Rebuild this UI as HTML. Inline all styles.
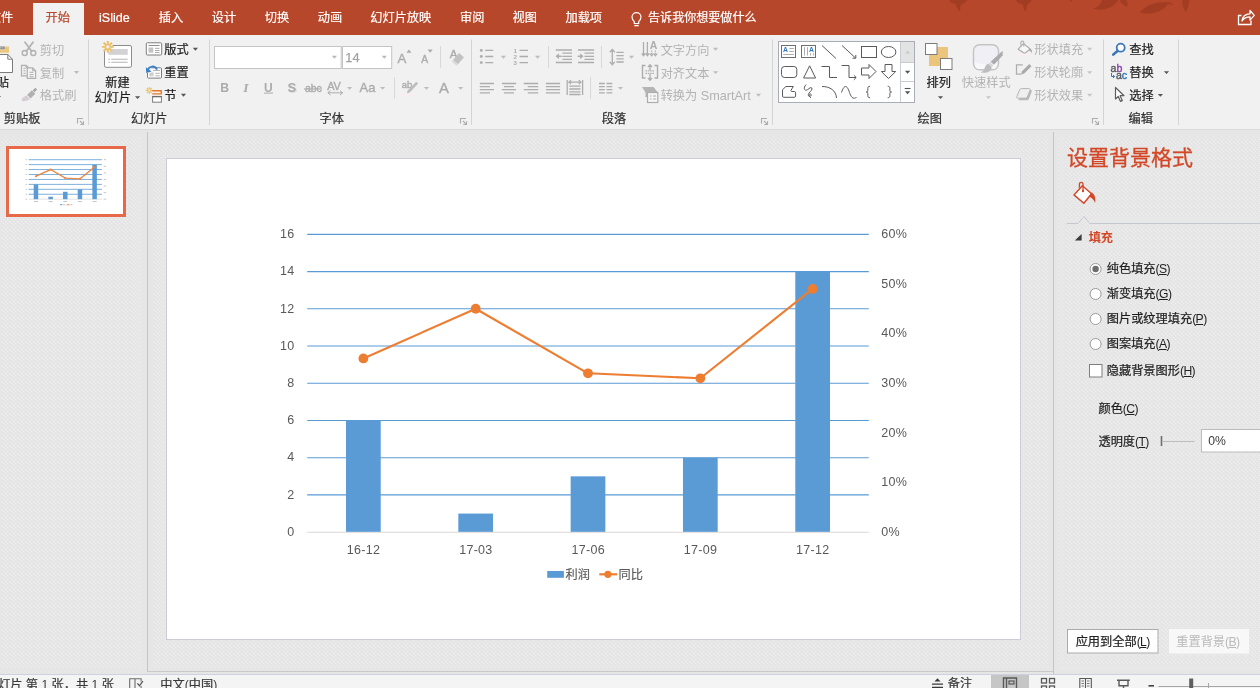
<!DOCTYPE html><html lang="zh-CN"><head><meta charset="utf-8"><title>PowerPoint</title><style>
html,body{margin:0;padding:0}
body{width:1260px;height:688px;overflow:hidden;position:relative;background:#e6e6e6;font-family:"Liberation Sans","Noto Sans CJK SC",sans-serif}
div{position:absolute;box-sizing:border-box}
svg{display:block;overflow:hidden;will-change:transform}
svg text{font-family:"Liberation Sans","Noto Sans CJK SC",sans-serif}
#dots{position:absolute;left:0;top:0;will-change:auto}
#tabs{left:0;top:0;width:1260px;height:35px;background:#b7472a}
#ribbon{left:0;top:35px;width:1260px;height:95px;background:#f1f1f1;border-bottom:1px solid #dadada}
#thumbs{left:0;top:132px;width:148px;height:540px;border-right:1px solid #c4c4c4}
#thumb{left:6px;top:146px;width:120px;height:71px;border:3px solid #e8694a;background:#fff}
#slide{left:166px;top:158px;width:855px;height:482px;border:1px solid #cbccd8;background:#fff}
#work-bottom{left:148px;top:671px;width:906px;height:1px;background:#c9c9c9}
#pane{left:1053px;top:132px;width:207px;height:542px;border-left:1px solid #c4c4c4}
#status{left:0;top:674px;width:1260px;height:14px;background:#f4f4f4;border-top:1px solid #d0d1de}
</style></head><body><svg id="dots" width="1260" height="688"><defs><pattern id="dp" width="4" height="4" patternUnits="userSpaceOnUse"><rect x="1" y="1" width="1" height="1" fill="#f0f0f0"/><rect x="3" y="3" width="1" height="1" fill="#f0f0f0"/></pattern></defs><rect x="0" y="137" width="143" height="532" fill="url(#dp)"/><rect x="152" y="136" width="897" height="532" fill="url(#dp)"/><rect x="1058" y="136" width="202" height="535" fill="url(#dp)"/></svg><div id="tabs"><svg width="1260" height="35" viewBox="0 0 1260 35"><g fill="#a23d23"><path d="M949 0c1.200 2.200 3.500 3.600 6.500 4c.600 3 2.200 5.600 4.800 7.600c-.300-3 0-5.500 1.200-7.600c2.600-.500 4.700-1.800 6.200-4z"/><path d="M1015.500 0c1.500 2.500 4 4 7.200 4.200c.300 3 1.300 5.600 3.100 7.900c.200-3 .800-5.600 2-7.900c1.800-.800 3.200-2.200 4-4.200z"/><path d="M1069.500 0h3l-1.300 2z"/><path d="M1118 0c-2.500 5.200-8.500 9-16.500 9.600c-3 .200-6-.200-8.500-1c4.200-1.200 7.500-3.700 9-8.600z"/><path d="M1119.800 0c1.200 3 3.600 5.500 7.200 7c.800-2.500.600-5-.500-7z"/><path d="M1139.700 12.600c5-6 12.500-9.800 21.500-10l6.300-.500c2.200 0 4.400 1 6.500 2.700c-2.200-.600-4.200-.800-6.200-.500c-3.200 5-10 8.700-18 9.300c-3.800.300-7.200 0-10.100-1z"/><path d="M1182.300 0c-.300 4.500 1 8.600 3.800 12.200c1.600-3.600 2.700-7.700 3.200-12.200z"/></g><rect x="33" y="3" width="51" height="32" fill="#f1f1f1"/><text x="-11.15" y="22.3" font-size="12.2" fill="#ffffff" stroke="#ffffff" stroke-width=".2" textLength="24.4">文件</text><text x="45.45" y="22.3" font-size="12.2" fill="#b7472a" stroke="#b7472a" stroke-width=".2" textLength="24.4">开始</text><text x="99" y="22" font-size="12.6" fill="#fff" stroke="#fff" stroke-width=".200">iSlide</text><text x="158.75" y="22.3" font-size="12.2" fill="#ffffff" stroke="#ffffff" stroke-width=".2" textLength="24.4">插入</text><text x="211.75" y="22.3" font-size="12.2" fill="#ffffff" stroke="#ffffff" stroke-width=".2" textLength="24.4">设计</text><text x="264.75" y="22.3" font-size="12.2" fill="#ffffff" stroke="#ffffff" stroke-width=".2" textLength="24.4">切换</text><text x="317.75" y="22.3" font-size="12.2" fill="#ffffff" stroke="#ffffff" stroke-width=".2" textLength="24.4">动画</text><text x="370.25" y="22.3" font-size="12.2" fill="#ffffff" stroke="#ffffff" stroke-width=".2" textLength="61">幻灯片放映</text><text x="460.05" y="22.3" font-size="12.2" fill="#ffffff" stroke="#ffffff" stroke-width=".2" textLength="24.4">审阅</text><text x="512.45" y="22.3" font-size="12.2" fill="#ffffff" stroke="#ffffff" stroke-width=".2" textLength="24.4">视图</text><text x="565.45" y="22.3" font-size="12.2" fill="#ffffff" stroke="#ffffff" stroke-width=".2" textLength="36.6">加载项</text><g fill="none" stroke="#fff" stroke-width="1.200"><path d="M634.300 21.700c-1.400-1.400-2.300-2.800-2.300-4.600a4.500 4.500 0 0 1 9 0c0 1.800-.900 3.200-2.300 4.600v1.800h-4.400z"/><path d="M634.300 25.600h4.400" stroke-width="1.400"/></g><text x="648.06" y="22.24" font-size="12.05" fill="#ffffff" stroke="#ffffff" stroke-width=".2" textLength="108.45">告诉我你想要做什么</text><g fill="none" stroke="#fff" stroke-width="1.3"><path d="M1241.5 15.5h-3v9h12.500v-4"/><path d="M1242 21c.5-4.500 3.500-7 8-7.200v-3.300l4.300 4.900l-4.300 4.700v-3.300c-3.500 0-6 1.100-8 4.200z" stroke-linejoin="round"/></g></svg></div><div id="ribbon"><svg width="1260" height="94" viewBox="0 35 1260 94"><path d="M-6 49.400h11v-3h4v6.400h-15z" fill="#edc77d"/><path d="M-3 46.400h7.800v2.900h-7.800z" fill="#8f8f8f"/><path d="M0 47.800h3.500" stroke="#c9c9c9" stroke-width="1" stroke-dasharray="1 .700"/><path d="M-6 54.500h13.800l4.700 4.700v13.300h-18.500z" fill="#fff" stroke="#7b7b7b" stroke-width="1"/><path d="M7.800 54.500v4.700h4.700" fill="none" stroke="#7b7b7b" stroke-width="1"/><text x="-15.55" y="86.9" font-size="12.2" fill="#1f1f1f" stroke="#1f1f1f" stroke-width=".22" textLength="24.4">粘贴</text><path d="M-4.2 96.05h5.2l-2.6 2.9z" fill="#555"/><g fill="none" stroke="#b3b3b3" stroke-width="1.500"><circle cx="24.700" cy="53.100" r="2.500"/><circle cx="33.300" cy="53.100" r="2.500"/><path d="M26.300 51.200L33 42.200M31.700 51.200L25 42.200" stroke-width="1.800" stroke-linecap="round"/></g><text x="39.85" y="54.5" font-size="12.2" fill="#b3b3b3" textLength="24.4">剪切</text><g fill="none" stroke="#b0b0b0" stroke-width="1.200"><path d="M28.300 67.800v-.500l-2.200-2h-4.600v10.500h5.500"/><path d="M26 65.300v2.200h2.200" stroke-width="1"/><path d="M27.300 67.800h5.300l3 3v7.500h-8.300z" fill="#f4f4f4"/><path d="M32.600 67.800v3h3" stroke-width="1"/><path d="M23.500 68.300h2.200M23.500 70.800h2.200M23.500 73.300h2.200M29.500 72.300h4M29.500 74.600h4M29.500 76.700h4" stroke-width="1"/></g><text x="39.85" y="77.5" font-size="12.2" fill="#b3b3b3" textLength="24.4">复制</text><path d="M73.9 71.05h5.2l-2.6 2.9z" fill="#bdbdbd"/><g><path d="M35.300 87.700l1.900 1.900l-2.700 2.700l-1.900-1.900z" fill="#a9a9a9"/><path d="M31.800 90.200l3.500 3.500l-4.700 4.700l-3.500-3.500z" fill="#b1b1b1"/><path d="M26.300 95.600l3.600 3.600l-2.800 1.300l-4.300 1l-1.400-1.400l1.700-2.700z" fill="#d3cbd2"/><path d="M24.300 97.300l2.400 2.400M22.800 99.300l1.500 1.500" stroke="#e6e0e4" stroke-width=".700"/></g><text x="39.850" y="100" font-size="12.2" fill="#b3b3b3" textLength="36.6">格式刷</text><text x="3.85" y="123.4" font-size="12.2" fill="#333333" stroke="#333333" stroke-width=".22" textLength="36.6">剪贴板</text><g transform="translate(77 118)" fill="none" stroke="#adadad" stroke-width="1.100"><path d="M0.500 5.500V0.500H6"/><path d="M3 3L6.200 6.200"/><path d="M6.500 3.300V6.500H3.300"/></g><rect x="88" y="39.500" width="1" height="85.500" fill="#d4d4d4"/><rect x="104.500" y="45.500" width="27" height="21.800" rx="1.500" fill="#fff" stroke="#8c8c8c" stroke-width="1"/><rect x="108.300" y="49" width="19.400" height="5.800" fill="#d2d2d4"/><path d="M108.300 59.300h1.800M111.300 59.300h16.300M108.300 62.300h1.800M111.300 62.300h16.300" stroke="#b4b4b4" stroke-width="1.100"/><circle cx="107.800" cy="46.900" r="5.200" fill="#f1f1f1"/><path d="M109.39 46.900L113.700 46.900M108.930 48.030L111.970 51.070M107.800 48.490L107.800 52.800M106.670 48.030L103.630 51.070M106.210 46.900L101.900 46.900M106.670 45.770L103.630 42.730M107.800 45.310L107.800 41M108.930 45.770L111.970 42.730" stroke="#ecbf60" stroke-width="1.9" fill="none"/><text x="105.25" y="87" font-size="12.2" fill="#1f1f1f" stroke="#1f1f1f" stroke-width=".22" textLength="24.4">新建</text><text x="94.65" y="102" font-size="12.2" fill="#1f1f1f" stroke="#1f1f1f" stroke-width=".22" textLength="36.6">幻灯片</text><path d="M135 96.150h5.2l-2.6 2.9z" fill="#555"/><rect x="146.300" y="42.800" width="15.400" height="12.200" rx="1" fill="#fff" stroke="#7d7d7d" stroke-width="1"/><path d="M148.500 45.500h11" stroke="#8a8a8a" stroke-width="1"/><rect x="148.500" y="47.500" width="4.800" height="5.200" fill="#c4c4c4"/><path d="M155 48.300h4.500M155 50.500h4.500M155 52.500h4.500" stroke="#a0a0a0" stroke-width="0.900"/><text x="164.35" y="53.9" font-size="12.2" fill="#1f1f1f" stroke="#1f1f1f" stroke-width=".22" textLength="24.4">版式</text><path d="M192.8 47.850h5.2l-2.6 2.9z" fill="#555"/><rect x="147.500" y="67.800" width="14" height="10.300" rx="1" fill="#fff" stroke="#7d7d7d" stroke-width="1"/><rect x="149.300" y="72.300" width="4.300" height="4" fill="#cfcfcf"/><path d="M155.300 73.300h4.500M155.300 75.800h4.500M153 70.500h7" stroke="#ababab" stroke-width="0.900"/><path d="M144.800 66.500h6.500v6.500h-6.500z" fill="#f1f1f1"/><path d="M157 69.600c-1-2.100-2.800-3.200-5-3c-1.900.200-3.300 1.200-4.200 2.900" fill="none" stroke="#3d7fc9" stroke-width="1.900"/><path d="M145.900 67.300l.300 5.600l5.300-1.400z" fill="#3d7fc9"/><text x="164.35" y="77.3" font-size="12.2" fill="#1f1f1f" stroke="#1f1f1f" stroke-width=".22" textLength="24.4">重置</text><path d="M150.250 90.400L152.800 90.400M149.970 91.070L151.770 92.870M149.300 91.340L149.300 93.900M148.630 91.070L146.830 92.870M148.360 90.400L145.800 90.400M148.630 89.730L146.830 87.930M149.300 89.460L149.300 86.900M149.970 89.730L151.770 87.930" stroke="#ecbf60" stroke-width="1.1" fill="none"/><path d="M152.300 90.700h8.900v3.200h-8.900" fill="none" stroke="#e97826" stroke-width="1.400"/><rect x="152.600" y="96.600" width="8.800" height="5.600" fill="#fff" stroke="#7d7d7d" stroke-width="1"/><path d="M152.100 96.600h9.800" stroke="#6f6f6f" stroke-width="1.300"/><text x="164.350" y="100" font-size="12.2" fill="#1f1f1f" stroke="#1f1f1f" stroke-width=".22" textLength="12.2">节</text><path d="M180.9 93.850h5.2l-2.6 2.9z" fill="#555"/><text x="130.95" y="123.4" font-size="12.2" fill="#333333" stroke="#333333" stroke-width=".22" textLength="36.6">幻灯片</text><rect x="209" y="39.5" width="1" height="85.5" fill="#d4d4d4"/><rect x="214.500" y="46.500" width="126.700" height="22" fill="#fff" stroke="#c4c4c4" stroke-width="1"/><path d="M331.8 55.750h5.2l-2.6 2.9z" fill="#b9b9b9"/><rect x="342.500" y="46.500" width="49.200" height="22" fill="#fff" stroke="#c4c4c4" stroke-width="1"/><text x="345.300" y="61.900" font-size="12.800" fill="#a0a2a8" stroke="#a0a2a8" stroke-width=".250">14</text><path d="M381.7 55.75h5.2l-2.6 2.9z" fill="#b9b9b9"/><text x="397.600" y="62.600" font-size="13.200" fill="#ababab" stroke="#ababab" stroke-width=".350">A</text><path d="M406.400 52.700l2.500-3.200l2.500 3.200z" fill="#ababab"/><text x="421.200" y="62.600" font-size="10.300" fill="#ababab" stroke="#ababab" stroke-width=".350">A</text><path d="M427.600 49.500h5.200l-2.600 3.200z" fill="#ababab"/><rect x="440" y="46" width="1" height="21.700" fill="#d8d8d8"/><text x="449.800" y="57.800" font-size="11.500" fill="#ababab" stroke="#ababab" stroke-width=".350">A</text><path d="M459 53l5 4.200l-6 7l-5-4.200z" fill="#c2c2c2"/><path d="M453 60l5 4.200l-1.300 1.500l-5-4.200z" fill="#d9d9d9"/><text x="220.200" y="91.700" font-size="12.200" font-weight="bold" fill="#ababab">B</text><text x="243.200" y="92" font-size="13.500" font-style="italic" font-weight="bold" style="font-family:Liberation Serif,serif" fill="#ababab">I</text><text x="264" y="91.500" font-size="12" fill="#ababab" font-weight="bold">U</text><rect x="264" y="92.600" width="9" height="1" fill="#ababab"/><text x="288.800" y="93.400" font-size="13" font-weight="bold" fill="#dcdcdc">S</text><text x="287.400" y="92.200" font-size="13" font-weight="bold" fill="#ababab">S</text><text x="305" y="91.900" font-size="10.400" fill="#ababab" stroke="#ababab" stroke-width=".350">abc</text><rect x="304" y="88.400" width="18" height="1.100" fill="#ababab"/><text x="327.300" y="89.600" font-size="11" fill="#ababab" letter-spacing="-0.300" stroke="#ababab" stroke-width=".350">AV</text><path d="M328 92.800h14.500M330.500 90.600l-2.700 2.200l2.700 2.200M340 90.600l2.700 2.200l-2.700 2.200" fill="none" stroke="#ababab" stroke-width="1"/><path d="M347 86.950h5.2l-2.6 2.9z" fill="#bdbdbd"/><text x="359.600" y="92" font-size="12.800" fill="#ababab" stroke="#ababab" stroke-width=".350">Aa</text><path d="M380 86.950h5.2l-2.6 2.9z" fill="#bdbdbd"/><rect x="394" y="77.200" width="1" height="21.500" fill="#d8d8d8"/><text x="401.800" y="88" font-size="9.500" fill="#ababab" stroke="#ababab" stroke-width=".350">ab</text><path d="M416.200 81.800l2 1.800l-8.500 9l-3 1l1-3z" fill="#bdbdbd"/><rect x="402" y="93.300" width="16" height="2.900" fill="#f7efef"/><path d="M423.9 86.950h5.2l-2.6 2.9z" fill="#bdbdbd"/><text x="439" y="92.800" font-size="14.800" fill="#ababab" stroke="#ababab" stroke-width=".350">A</text><path d="M458 86.950h5.2l-2.6 2.9z" fill="#bdbdbd"/><text x="319.55" y="123.4" font-size="12.2" fill="#333333" stroke="#333333" stroke-width=".22" textLength="24.4">字体</text><g transform="translate(460 118)" fill="none" stroke="#adadad" stroke-width="1.100"><path d="M0.500 5.500V0.500H6"/><path d="M3 3L6.200 6.200"/><path d="M6.500 3.300V6.500H3.300"/></g><rect x="471" y="39.5" width="1" height="85.5" fill="#d4d4d4"/><g fill="#adadad"><circle cx="481.300" cy="50.400" r="1.450"/><circle cx="481.300" cy="56.500" r="1.450"/><circle cx="481.300" cy="62.600" r="1.450"/></g><path d="M485.2 50.400H493.2M485.2 56.500H493.2M485.2 62.600H493.2" stroke="#adadad" stroke-width="1.3" fill="none"/><path d="M500.8 55.750h5.2l-2.6 2.9z" fill="#bdbdbd"/><g font-size="6.200" fill="#adadad" font-weight="bold"><text x="513.400" y="52.600">1</text><text x="513.400" y="58.700">2</text><text x="513.400" y="64.800">3</text></g><path d="M519.5 50.400H528M519.5 56.500H528M519.5 62.600H528" stroke="#adadad" stroke-width="1.3" fill="none"/><path d="M535 55.750h5.2l-2.6 2.9z" fill="#bdbdbd"/><rect x="548" y="46" width="1" height="21.700" fill="#d8d8d8"/><path d="M555.8 50H572M555.8 62.500H572" stroke="#adadad" stroke-width="1.3" fill="none"/><path d="M562.4 53.200H572M562.4 56.300H572M562.4 59.400H572" stroke="#adadad" stroke-width="1.3" fill="none"/><path d="M557.3 56.300h4.500" fill="none" stroke="#adadad" stroke-width="1.500"/><path d="M555.6 56.300l3.300-3v6z" fill="#adadad"/><path d="M577.9 50H594.1M577.9 62.500H594.1" stroke="#adadad" stroke-width="1.3" fill="none"/><path d="M584.5 53.200H594.1M584.5 56.300H594.1M584.5 59.400H594.1" stroke="#adadad" stroke-width="1.3" fill="none"/><path d="M577.6 56.300h4" fill="none" stroke="#adadad" stroke-width="1.500"/><path d="M583.5 56.300l-3.300-3v6z" fill="#adadad"/><rect x="601" y="46" width="1" height="21.7" fill="#d8d8d8"/><path d="M612.300 49.800v14.600M609.800 52.300l2.500-2.800l2.500 2.800M609.800 61.900l2.500 2.800l2.500-2.800" fill="none" stroke="#adadad" stroke-width="1.300"/><path d="M616.4 52.400H623.7M616.4 55.600H623.7M616.4 58.800H623.7M616.4 62H623.7" stroke="#adadad" stroke-width="1.3" fill="none"/><path d="M628.9 55.750h5.2l-2.6 2.9z" fill="#bdbdbd"/><path d="M479.8 83.500H494M479.8 89.700H494" stroke="#adadad" stroke-width="1.3" fill="none"/><path d="M479.8 86.600H490M479.8 92.800H490" stroke="#adadad" stroke-width="1.3" fill="none"/><path d="M501.9 83.500H516.1M501.9 89.700H516.1" stroke="#adadad" stroke-width="1.3" fill="none"/><path d="M504 86.600H514M504 92.800H514" stroke="#adadad" stroke-width="1.3" fill="none"/><path d="M523.8 83.500H538.2M523.8 89.700H538.2" stroke="#adadad" stroke-width="1.3" fill="none"/><path d="M527.8 86.600H538.2M527.8 92.800H538.2" stroke="#adadad" stroke-width="1.3" fill="none"/><path d="M545.9 83.500H560.1M545.9 86.600H560.1M545.9 89.700H560.1M545.9 92.800H560.1" stroke="#adadad" stroke-width="1.3" fill="none"/><path d="M567.200 80v15M582.600 80v15" stroke="#adadad" stroke-width="1.300"/><path d="M569 82.200h11.800M571 80.300l-2.200 1.900l2.200 1.900M578.800 80.300l2.200 1.900l-2.200 1.900" fill="none" stroke="#adadad" stroke-width="1.200"/><path d="M569.3 86.200H580.5M569.3 89H580.5M569.3 91.800H580.5M569.3 94.500H580.5" stroke="#adadad" stroke-width="1.3" fill="none"/><rect x="590" y="77.200" width="1" height="21.500" fill="#d8d8d8"/><path d="M599 83.500H604.8M599 86.600H604.8M599 89.700H604.8M599 92.800H604.8" stroke="#adadad" stroke-width="1.3" fill="none"/><path d="M606.5 83.500H612.3M606.5 86.600H612.3M606.5 89.700H612.3M606.5 92.800H612.3" stroke="#adadad" stroke-width="1.3" fill="none"/><path d="M617.9 86.950h5.2l-2.6 2.9z" fill="#bdbdbd"/><path d="M643.500 42v13.500M647.400 42v13.500M641.700 53.300l1.800 2.300l1.800-2.300M645.600 53.300l1.800 2.300l1.800-2.300" fill="none" stroke="#adadad" stroke-width="1.300"/><text x="649.800" y="49.400" font-size="10.500" fill="#adadad" font-weight="bold">A</text><path d="M651.600 50.500v5M655.400 50.500v5" stroke="#adadad" stroke-width="1.200" stroke-dasharray="1.200 1"/><path d="M649.900 53.600l1.700 2.100l1.700-2.100M653.700 53.600l1.700 2.100l1.700-2.100" fill="none" stroke="#adadad" stroke-width="1.200"/><text x="660.65" y="54.7" font-size="12.2" fill="#b3b3b3" textLength="48.8">文字方向</text><path d="M713 47.850h5.2l-2.6 2.9z" fill="#bdbdbd"/><path d="M645.500 65.500h-3v12.500h3M654.500 65.500h3v12.500h-3" fill="none" stroke="#adadad" stroke-width="1.400"/><path d="M650 65v5.500M648 67l2-2.200l2 2.200M650 74v6M648 78l2 2.200l2-2.200" fill="none" stroke="#adadad" stroke-width="1.300"/><path d="M645.500 70.800h9M645.500 73.300h9" stroke="#adadad" stroke-width="1.200" stroke-dasharray="1.500 .800"/><text x="660.65" y="77.6" font-size="12.2" fill="#b3b3b3" textLength="48.8">对齐文本</text><path d="M713 71.150h5.2l-2.6 2.9z" fill="#bdbdbd"/><path d="M642 87h11.500l4 5h-10.500v5h-1.500v-4.500z" fill="#b4b4b4"/><rect x="647.500" y="92.500" width="10.300" height="10" fill="#f6f6f6" stroke="#adadad" stroke-width="1.200"/><path d="M650 96h1.500M653 96h3M650 99h1.500M653 99h3" stroke="#adadad" stroke-width="1.200"/><text x="660.65" y="100.1" font-size="12.2" fill="#b3b3b3" textLength="36.6">转换为</text><text x="697.25" y="100.1" font-size="12.7" fill="#b3b3b3" xml:space="preserve"> SmartArt</text><path d="M755.9 93.850h5.2l-2.6 2.9z" fill="#bdbdbd"/><text x="601.75" y="123.4" font-size="12.2" fill="#333333" stroke="#333333" stroke-width=".22" textLength="24.4">段落</text><g transform="translate(761 118)" fill="none" stroke="#adadad" stroke-width="1.100"><path d="M0.500 5.500V0.500H6"/><path d="M3 3L6.200 6.200"/><path d="M6.500 3.300V6.500H3.300"/></g><rect x="772" y="39.5" width="1" height="85.5" fill="#d4d4d4"/><rect x="778.500" y="41.500" width="136" height="61" fill="#fff" stroke="#a9aeb6" stroke-width="1"/><rect x="901" y="42" width="13" height="20" fill="#e3e3e3"/><path d="M900.500 42v60M901 62.500h13M901 81.500h13" stroke="#c9ccd2" stroke-width="1" fill="none"/><path d="M905 53.500l2.600-3l2.600 3z" fill="#c9c9c9"/><path d="M904.9 70.800h5.400l-2.700 3z" fill="#555"/><path d="M904.700 88.500h5.800" stroke="#555" stroke-width="1.100"/><path d="M904.9 91.300h5.400l-2.700 3z" fill="#555"/><g fill="none" stroke="#5a5a5a" stroke-width="1"><rect x="781.500" y="45.500" width="14" height="12" stroke="#6e6e6e"/><path d="M789.300 48.500h4.500M789.300 51.500h4.500M783.200 54.500h10.600" stroke="#adadad"/><rect x="801.500" y="45.500" width="14" height="12" stroke="#6e6e6e"/><path d="M804.500 47.200v8.300M807.500 47.200v8.300" stroke="#adadad"/><path d="M810.500 53.200v2.300M813.500 53.200v2.300" stroke="#adadad"/><path d="M822 45.500l14 13"/><path d="M842 45.500l13.500 12.500M852.500 58.200h3.300v-3.300"/><rect x="861.500" y="46.500" width="15" height="11"/><ellipse cx="888.600" cy="52" rx="7.300" ry="5.500"/><rect x="781.500" y="66.500" width="15.300" height="11" rx="3"/><path d="M809.600 65.800l6 12.200h-12z"/><path d="M821.500 66.500h8v11h7.500"/><path d="M841.500 65.500h7.500v12h7M853.800 75.200l2.400 2.300l-2.400 2.300"/><path d="M861.500 68h7.500v-3.500l7 7l-7 7v-3.500h-7.500z"/><path d="M885 64.500h7v7h3.700l-7.200 7l-7.200-7h3.700z"/><path d="M786 86.500h7.300l-2.300 3.800c-.300.700.200 1.200 1 1.200h2.300c.800 0 1.300.500 1.300 1.300v3.200c0 .800-.500 1.300-1.300 1.300h-10.500c-.800 0-1.300-.500-1.300-1.300v-6.300z" stroke-linejoin="round"/><path d="M806.200 84.500c-1.600 1.600-2.400 3.600-1.600 5c.800 1.400 2.900.600 4.400-.900c1.500-1.500 3-1.300 3 .300c0 2-3.400 3.500-3.700 5.700c-.200 1.700 1.400 2.300 2.500 1.300c1-1 .300-2.200-.800-1.900c-1.300.400-1.200 2.200 0 3.100l.900.700"/><path d="M822 86.500c8 0 14 4 14.500 11.500"/><path d="M841.500 92.500c2.500-8 5.500-8 8 0c2.500 7 4.500 6 7 5"/></g><path d="M870 86.300c-1.600 0-2.200.700-2.200 2v2.300c0 1-.600 1.400-1.600 1.400c1 0 1.600.400 1.600 1.400v2.300c0 1.300.600 2 2.200 2M887.700 86.300c1.600 0 2.200.700 2.200 2v2.300c0 1 .600 1.400 1.600 1.400c-1 0-1.600.400-1.600 1.400v2.300c0 1.300-.600 2-2.200 2" fill="none" stroke="#5a5a5a" stroke-width="1"/><text x="783.100" y="52.300" font-size="6.800" font-weight="bold" fill="#3375c0">A</text><text x="809.100" y="52.300" font-size="6.800" font-weight="bold" fill="#3375c0">A</text><rect x="929" y="47" width="19" height="19" fill="#ebc57c"/><rect x="925.500" y="43.500" width="11.500" height="11" fill="#fff" stroke="#7c7c7c" stroke-width="1"/><rect x="940.500" y="58.500" width="11.500" height="11" fill="#fff" stroke="#7c7c7c" stroke-width="1"/><text x="926.45" y="87.1" font-size="12.2" fill="#1f1f1f" stroke="#1f1f1f" stroke-width=".22" textLength="24.4">排列</text><path d="M937.9 96.150h5.2l-2.6 2.9z" fill="#555"/><rect x="973.500" y="44.700" width="25" height="25" rx="6" fill="#f0eff5" stroke="#c3c3c3" stroke-width="1.400"/><path d="M975 62c3 3 18 3 22 0v3c0 2-1.500 4-4 4h-14c-2.500 0-4-2-4-4z" fill="#f8f8fa"/><path d="M1002.600 50.800v4.600l-8.600 9.400l-3.400-3z" fill="#acacac"/><path d="M990 62.400l3.400 3l-1.400 1.600l-3.400-3z" fill="#d6d6d6"/><path d="M988.200 63.800l3.300 2.900c.5 2.500-1.500 5.200-5 5.800c-1.800.300-3.800.300-5.700-.100c2.400-1 3.300-2.500 4-4.700c.600-1.900 1.700-3.300 3.400-3.900z" fill="#bdbdbd"/><text x="961.85" y="87.1" font-size="12.2" fill="#b3b3b3" textLength="48.8">快速样式</text><path d="M985.9 96.150h5.2l-2.6 2.9z" fill="#c6c6c6"/><path d="M1023.400 43.600l6.800 5.300l-5.600 4.600l-6.400-4.400z" fill="#f7f7f7" stroke="#b1b1b1" stroke-width="1.300" stroke-linejoin="round"/><path d="M1023.800 46.500v-3.700c0-2.300-3-2.300-3 0v2.700" fill="none" stroke="#b1b1b1" stroke-width="1.100"/><path d="M1030.300 48.700c1.500.800 2 2.300 1.500 4.200c-.900-1.300-1.900-2-3.200-2.700z" fill="#a8a8a8"/><rect x="1016" y="53.600" width="15.800" height="3.300" fill="#f6efef"/><text x="1034.350" y="54" font-size="12.2" fill="#b3b3b3" textLength="48.8">形状填充</text><path d="M1087.1 47.850h5.2l-2.6 2.9z" fill="#c6c6c6"/><path d="M1022.800 64.800h-6.300v9.400h4.500" fill="none" stroke="#aeaeae" stroke-width="1.300"/><path d="M1029.300 64l2.200 2.200l-7.300 7.300l-3.200 1l1-3.200z" fill="#aaaaaa"/><text x="1034.35" y="77.3" font-size="12.2" fill="#b3b3b3" textLength="48.8">形状轮廓</text><path d="M1087.1 71.150h5.2l-2.6 2.9z" fill="#c6c6c6"/><path d="M1018.600 100.200l3.200-9c.300-.900 1-1.400 2-1.400h6.300c1.400 0 2 .900 1.500 2.200l-2.700 7c-.300.800-1 1.200-2 1.200z" fill="#b9b9b9"/><path d="M1016.800 96.700l2.800-6.800c.300-.800 1-1.300 2-1.300h7c1.300 0 1.900.800 1.400 2l-2.700 6.400c-.300.800-1 1.200-2 1.200h-7.400c-1.200 0-1.600-.600-1.100-1.500z" fill="#efefef" stroke="#b4b4b4" stroke-width="1"/><text x="1034.35" y="99.9" font-size="12.2" fill="#b3b3b3" textLength="48.8">形状效果</text><path d="M1087.1 93.850h5.2l-2.6 2.9z" fill="#c6c6c6"/><text x="917.45" y="123.4" font-size="12.2" fill="#333333" stroke="#333333" stroke-width=".22" textLength="24.4">绘图</text><g transform="translate(1092 118)" fill="none" stroke="#adadad" stroke-width="1.100"><path d="M0.500 5.500V0.500H6"/><path d="M3 3L6.200 6.200"/><path d="M6.500 3.300V6.500H3.300"/></g><rect x="1103" y="39.5" width="1" height="85.5" fill="#d4d4d4"/><circle cx="1120.700" cy="47.700" r="4" fill="#fff" stroke="#3b78b8" stroke-width="1.800"/><path d="M1117.500 50.900l-4.200 3.700" stroke="#3b78b8" stroke-width="2.600" stroke-linecap="round"/><text x="1129.250" y="54" font-size="12.2" fill="#1f1f1f" stroke="#1f1f1f" stroke-width=".22" textLength="24.4">查找</text><g font-size="10.600" stroke-width=".400"><text x="1110.600" y="71.500" fill="#5a5a5a" stroke="#5a5a5a">a</text><text x="1116.500" y="71.500" fill="#8d46b0" stroke="#8d46b0">b</text><text x="1116" y="78.900" fill="#5a5a5a" stroke="#5a5a5a">a</text><text x="1121.800" y="78.900" fill="#2e79c2" stroke="#2e79c2">c</text></g><path d="M1111.500 73v3.500h3M1113 75l1.700 1.500l-1.700 1.500" fill="none" stroke="#2e79c2" stroke-width="1"/><text x="1129.25" y="77.3" font-size="12.2" fill="#1f1f1f" stroke="#1f1f1f" stroke-width=".22" textLength="24.4">替换</text><path d="M1163.9 71.150h5.2l-2.6 2.9z" fill="#555"/><path d="M1115.500 87.500v11.500l2.800-2.600l2.200 5l1.800-.800l-2.200-4.900h3.900z" fill="#fff" stroke="#5e5e5e" stroke-width="1.200" stroke-linejoin="round"/><text x="1129.250" y="100" font-size="12.2" fill="#1f1f1f" stroke="#1f1f1f" stroke-width=".22" textLength="24.4">选择</text><path d="M1157.8 93.950h5.2l-2.6 2.9z" fill="#555"/><text x="1128.45" y="123.4" font-size="12.2" fill="#333333" stroke="#333333" stroke-width=".22" textLength="24.4">编辑</text><rect x="1178" y="39.5" width="1" height="85.5" fill="#d4d4d4"/></svg></div><div id="thumbs"></div><div id="thumb"><svg width="114" height="65" viewBox="9 149 114 65"><path d="M28.64 159.69H101.93M28.64 164.62H101.93M28.64 169.56H101.93M28.64 174.5H101.93M28.64 179.44H101.93M28.64 184.38H101.93M28.64 189.31H101.93M28.64 194.25H101.93" stroke="#7fb0de" stroke-width="1" fill="none"/><path d="M28.64 199.19H101.93" stroke="#dcdcdc" stroke-width=".800"/><rect x="33.72" y="184.38" width="4.500" height="14.81" fill="#5b9bd5"/><rect x="48.37" y="196.72" width="4.500" height="2.47" fill="#5b9bd5"/><rect x="63.03" y="191.78" width="4.500" height="7.41" fill="#5b9bd5"/><rect x="77.69" y="189.31" width="4.500" height="9.88" fill="#5b9bd5"/><rect x="92.35" y="164.62" width="4.500" height="34.56" fill="#5b9bd5"/><polyline points="35.97,176.15 50.62,169.56 65.28,178.12 79.94,178.78 94.6,166.93" fill="none" stroke="#ec8540" stroke-width="1.250"/><circle cx="35.97" cy="176.15" r="1" fill="#ec8540"/><circle cx="50.62" cy="169.56" r="1" fill="#ec8540"/><circle cx="65.28" cy="178.12" r="1" fill="#ec8540"/><circle cx="79.94" cy="178.78" r="1" fill="#ec8540"/><circle cx="94.6" cy="166.93" r="1" fill="#ec8540"/><g fill="#c9c9c9"><rect x="25.48" y="159.19" width="1.600" height="1" /><rect x="25.48" y="164.12" width="1.600" height="1" /><rect x="25.48" y="169.06" width="1.600" height="1" /><rect x="25.48" y="174" width="1.600" height="1" /><rect x="25.48" y="178.94" width="1.600" height="1" /><rect x="25.48" y="183.88" width="1.600" height="1" /><rect x="25.48" y="188.81" width="1.600" height="1" /><rect x="25.48" y="193.75" width="1.600" height="1" /><rect x="25.48" y="198.69" width="1.600" height="1" /><rect x="103.65" y="159.19" width="2.600" height="1" /><rect x="103.65" y="165.77" width="2.600" height="1" /><rect x="103.65" y="172.35" width="2.600" height="1" /><rect x="103.65" y="178.94" width="2.600" height="1" /><rect x="103.65" y="185.52" width="2.600" height="1" /><rect x="103.65" y="192.11" width="2.600" height="1" /><rect x="103.65" y="198.69" width="2.600" height="1" /><rect x="33.97" y="200.98" width="4" height="1.100" /><rect x="48.62" y="200.98" width="4" height="1.100" /><rect x="63.28" y="200.98" width="4" height="1.100" /><rect x="77.94" y="200.98" width="4" height="1.100" /><rect x="92.6" y="200.98" width="4" height="1.100" /></g><rect x="59.93" y="204.23" width="2.200" height="1" fill="#5b9bd5"/><rect x="62.54" y="204.23" width="3" height="1" fill="#c9c9c9"/><rect x="66.72" y="204.23" width="2.400" height="1" fill="#ee8a45"/><rect x="69.46" y="204.23" width="3" height="1" fill="#c9c9c9"/></svg></div><div id="slide"><svg width="853" height="480" viewBox="167 159 853 480"><path d="M307.2 234.3H868.8M307.2 271.54H868.8M307.2 308.77H868.8M307.2 346.01H868.8M307.2 383.25H868.8M307.2 420.49H868.8M307.2 457.73H868.8M307.2 494.96H868.8" stroke="#5b9bd5" stroke-width="1.200" fill="none"/><path d="M307.2 532.2H868.8" stroke="#dbd6d6" stroke-width="1.100"/><rect x="346.01" y="420.49" width="34.700" height="111.31" fill="#5b9bd5"/><rect x="458.33" y="513.58" width="34.700" height="18.22" fill="#5b9bd5"/><rect x="570.65" y="476.34" width="34.700" height="55.46" fill="#5b9bd5"/><rect x="682.97" y="457.73" width="34.700" height="74.08" fill="#5b9bd5"/><rect x="795.29" y="271.54" width="34.700" height="260.26" fill="#5b9bd5"/><polyline points="363.36,358.43 475.68,308.77 588,373.32 700.32,378.29 812.64,288.92" fill="none" stroke="#ed7d31" stroke-width="2.100" stroke-linejoin="round"/><circle cx="363.36" cy="358.43" r="4.900" fill="#ed7d31"/><circle cx="475.68" cy="308.77" r="4.900" fill="#ed7d31"/><circle cx="588" cy="373.32" r="4.900" fill="#ed7d31"/><circle cx="700.32" cy="378.29" r="4.900" fill="#ed7d31"/><circle cx="812.64" cy="288.92" r="4.900" fill="#ed7d31"/><g font-size="12.500" fill="#595959" letter-spacing="0.300"><text x="294.500" y="238.05" text-anchor="end">16</text><text x="294.500" y="275.29" text-anchor="end">14</text><text x="294.500" y="312.52" text-anchor="end">12</text><text x="294.500" y="349.76" text-anchor="end">10</text><text x="294.500" y="387" text-anchor="end">8</text><text x="294.500" y="424.24" text-anchor="end">6</text><text x="294.500" y="461.48" text-anchor="end">4</text><text x="294.500" y="498.71" text-anchor="end">2</text><text x="294.500" y="535.95" text-anchor="end">0</text><text x="881.200" y="238.05">60%</text><text x="881.200" y="287.7">50%</text><text x="881.200" y="337.35">40%</text><text x="881.200" y="387">30%</text><text x="881.200" y="436.65">20%</text><text x="881.200" y="486.3">10%</text><text x="881.200" y="535.95">0%</text><text x="363.56" y="554" text-anchor="middle">16-12</text><text x="475.88" y="554" text-anchor="middle">17-03</text><text x="588.2" y="554" text-anchor="middle">17-06</text><text x="700.52" y="554" text-anchor="middle">17-09</text><text x="812.84" y="554" text-anchor="middle">17-12</text></g><rect x="547.200" y="571" width="16.700" height="6.800" fill="#5b9bd5"/><text x="565.45" y="579.1" font-size="12.2" fill="#595959" stroke="#595959" stroke-width=".15" textLength="24.4">利润</text><path d="M599.300 574.300H617.200" stroke="#ed7d31" stroke-width="2.200"/><circle cx="607.900" cy="574.300" r="3.600" fill="#ed7d31"/><text x="618.45" y="579.1" font-size="12.2" fill="#595959" stroke="#595959" stroke-width=".15" textLength="24.4">同比</text></svg></div><div id="work-bottom"></div><div id="pane"><svg width="206" height="542" viewBox="1054 132 206 542"><text x="1066.96" y="165.28" font-size="21" fill="#d24726" stroke="#d24726" stroke-width=".3" textLength="126">设置背景格式</text><g fill="none" stroke="#d24726" stroke-width="1.500" stroke-linejoin="round"><path d="M1082.300 185.800l9.300 8l-7.800 9.400l-9.800-8.300z" fill="#fff"/><path d="M1083 190.500v-6.200c0-2.700-3.600-2.700-3.600 0v3.500" stroke-width="1.300"/></g><circle cx="1083" cy="191" r="1.200" fill="#d24726"/><path d="M1091.400 192.600c3 1.400 4.800 4.800 3.700 10.400c-1.200-3.400-3.200-5.400-6.300-6.600z" fill="#d24726"/><path d="M1067 223.500h11l6-7l6 7h170" fill="none" stroke="#c5c7d1" stroke-width="1"/><path d="M1081.600 234v6.600h-6.800z" fill="#3c3c3c"/><text x="1088.65" y="242.1" font-size="12.2" font-weight="bold" fill="#d24726" textLength="24.4">填充</text><circle cx="1095.600" cy="269" r="5.500" fill="#fff" stroke="#9a9a9a" stroke-width="1"/><circle cx="1095.600" cy="269" r="3.200" fill="#6e6e6e"/><text x="1106.75" y="273.1" font-size="12.2" fill="#1f1f1f" stroke="#1f1f1f" stroke-width=".22" textLength="48.8">纯色填充</text><text x="1155.55" y="273.1" font-size="12.2" fill="#1f1f1f" letter-spacing="-0.6" xml:space="preserve">(S)</text><rect x="1159.01" y="274" width="7.54" height="1" fill="#1f1f1f"/><circle cx="1095.600" cy="294" r="5.500" fill="#fff" stroke="#9a9a9a" stroke-width="1"/><text x="1106.75" y="298.1" font-size="12.2" fill="#1f1f1f" stroke="#1f1f1f" stroke-width=".22" textLength="48.8">渐变填充</text><text x="1155.55" y="298.1" font-size="12.2" fill="#1f1f1f" letter-spacing="-0.6" xml:space="preserve">(G)</text><rect x="1159.01" y="299" width="8.89" height="1" fill="#1f1f1f"/><circle cx="1095.600" cy="319" r="5.500" fill="#fff" stroke="#9a9a9a" stroke-width="1"/><text x="1106.75" y="323.1" font-size="12.2" fill="#1f1f1f" stroke="#1f1f1f" stroke-width=".22" textLength="85.4">图片或纹理填充</text><text x="1192.15" y="323.1" font-size="12.2" fill="#1f1f1f" letter-spacing="-0.6" xml:space="preserve">(P)</text><rect x="1195.61" y="324" width="7.54" height="1" fill="#1f1f1f"/><circle cx="1095.600" cy="344" r="5.500" fill="#fff" stroke="#9a9a9a" stroke-width="1"/><text x="1106.75" y="348.1" font-size="12.2" fill="#1f1f1f" stroke="#1f1f1f" stroke-width=".22" textLength="48.8">图案填充</text><text x="1155.55" y="348.1" font-size="12.2" fill="#1f1f1f" letter-spacing="-0.6" xml:space="preserve">(A)</text><rect x="1159.01" y="349" width="7.54" height="1" fill="#1f1f1f"/><rect x="1089.500" y="364.500" width="12.500" height="12.500" fill="#fff" stroke="#7f7f7f" stroke-width="1"/><text x="1106.75" y="374.9" font-size="12.2" fill="#1f1f1f" stroke="#1f1f1f" stroke-width=".22" textLength="73.2">隐藏背景图形</text><text x="1179.95" y="374.9" font-size="12.2" fill="#1f1f1f" letter-spacing="-0.6" xml:space="preserve">(H)</text><rect x="1183.41" y="376" width="8.21" height="1" fill="#1f1f1f"/><text x="1098.45" y="412.5" font-size="12.2" fill="#1f1f1f" stroke="#1f1f1f" stroke-width=".22" textLength="24.4">颜色</text><text x="1122.85" y="412.5" font-size="12.2" fill="#1f1f1f" letter-spacing="-0.6" xml:space="preserve">(C)</text><rect x="1126.31" y="414" width="8.21" height="1" fill="#1f1f1f"/><text x="1098.45" y="445.5" font-size="12.2" fill="#1f1f1f" stroke="#1f1f1f" stroke-width=".22" textLength="36.6">透明度</text><text x="1135.05" y="445.5" font-size="12.2" fill="#1f1f1f" letter-spacing="-0.6" xml:space="preserve">(T)</text><rect x="1138.51" y="447" width="6.85" height="1" fill="#1f1f1f"/><path d="M1161.500 436v10" stroke="#6f6f6f" stroke-width="1.600"/><path d="M1163 441.500h31.500" stroke="#bdbdbd" stroke-width="1"/><rect x="1201.500" y="429.500" width="70" height="22.500" fill="#fff" stroke="#bcbcbc" stroke-width="1"/><text x="1208.300" y="445.300" font-size="12.200" fill="#3a3a3a">0%</text><rect x="1067.500" y="629.500" width="90.500" height="23.500" fill="#fdfdfd" stroke="#acacac" stroke-width="1"/><text x="1075.65" y="645.7" font-size="12.2" fill="#1f1f1f" stroke="#1f1f1f" stroke-width=".22" textLength="61">应用到全部</text><text x="1136.65" y="645.7" font-size="12.2" fill="#1f1f1f" letter-spacing="-0.6" xml:space="preserve">(L)</text><rect x="1140.11" y="647" width="6.19" height="1" fill="#1f1f1f"/><rect x="1169" y="629" width="80" height="24.500" fill="#f8f8f8"/><text x="1176.25" y="645.7" font-size="12.2" fill="#b9b9b9" textLength="48.8">重置背景</text><text x="1225.05" y="645.7" font-size="12.2" fill="#b9b9b9" letter-spacing="-0.6" xml:space="preserve">(B)</text><rect x="1228.51" y="647" width="7.54" height="1" fill="#b9b9b9"/></svg></div><div id="status"><svg width="1260" height="13" viewBox="0 675 1260 13"><text x="-14.15" y="688.8" font-size="12.2" fill="#3a3a3a" stroke="#3a3a3a" stroke-width=".22" textLength="36.6">幻灯片</text><text x="25.84" y="688.8" font-size="12.2" fill="#3a3a3a" stroke="#3a3a3a" stroke-width=".22" textLength="12.2">第</text><text x="38.04" y="688.8" font-size="12.2" fill="#3a3a3a" xml:space="preserve"> 1 </text><text x="51.6" y="688.8" font-size="12.2" fill="#3a3a3a" stroke="#3a3a3a" stroke-width=".22" textLength="36.6">张，共</text><text x="88.2" y="688.8" font-size="12.2" fill="#3a3a3a" xml:space="preserve"> 1 </text><text x="101.77" y="688.8" font-size="12.2" fill="#3a3a3a" stroke="#3a3a3a" stroke-width=".22" textLength="12.2">张</text><path d="M129.700 688v-9.300h5.300v9.300M135 678.700h6.100v2.800M141.100 686v2" fill="none" stroke="#6c6c6c" stroke-width="1.100"/><path d="M137.400 683.400l2.100 2.400l3.400-4.600" fill="none" stroke="#555" stroke-width="1.300"/><text x="160.35" y="688.8" font-size="12.2" fill="#3a3a3a" stroke="#3a3a3a" stroke-width=".22" textLength="24.4">中文</text><text x="184.75" y="688.8" font-size="12.2" fill="#3a3a3a" xml:space="preserve">(</text><text x="188.81" y="688.8" font-size="12.2" fill="#3a3a3a" stroke="#3a3a3a" stroke-width=".22" textLength="24.4">中国</text><text x="213.21" y="688.8" font-size="12.2" fill="#3a3a3a" xml:space="preserve">)</text><path d="M934.500 681.500l3-3.200l3 3.200z" fill="#3a3a3a"/><path d="M932 684.200h11M932 687.300h11" stroke="#3a3a3a" stroke-width="1.200"/><text x="947.75" y="688.2" font-size="12.2" fill="#3a3a3a" stroke="#3a3a3a" stroke-width=".22" textLength="24.4">备注</text><rect x="991" y="675" width="38" height="13" fill="#c6c6c6"/><path d="M1003.500 688v-10h13v10M1006.500 688v-10" fill="none" stroke="#585858" stroke-width="1.400"/><rect x="1009" y="681" width="5" height="3" fill="none" stroke="#585858" stroke-width="1.200"/><g fill="none" stroke="#585858" stroke-width="1.300"><rect x="1041.500" y="678.500" width="5" height="4.500"/><rect x="1049.500" y="678.500" width="5" height="4.500"/><rect x="1041.500" y="686" width="5" height="4"/><rect x="1049.500" y="686" width="5" height="4"/></g><path d="M1079.800 688v-9.500h11.500v9.500M1085.500 678.500v9.500" fill="none" stroke="#585858" stroke-width="1.100"/><path d="M1081.500 681h2.500M1081.500 683.500h2.500M1081.500 686h2.500M1087 681h2.500M1087 683.500h2.500M1087 686h2.500" stroke="#585858" stroke-width=".800"/><path d="M1117 680.200h12.800M1119 680.500v5.300h9v-5.300M1123.500 686v2" fill="none" stroke="#585858" stroke-width="1.400"/><rect x="1148.500" y="685" width="5.500" height="1.600" fill="#444"/><path d="M1158.500 686.500h102" stroke="#a6a6a6" stroke-width="1"/><rect x="1189.200" y="678.500" width="4" height="10" fill="#5f5f5f"/><path d="M1208.500 683v5" stroke="#a6a6a6" stroke-width="1"/></svg></div></body></html>
